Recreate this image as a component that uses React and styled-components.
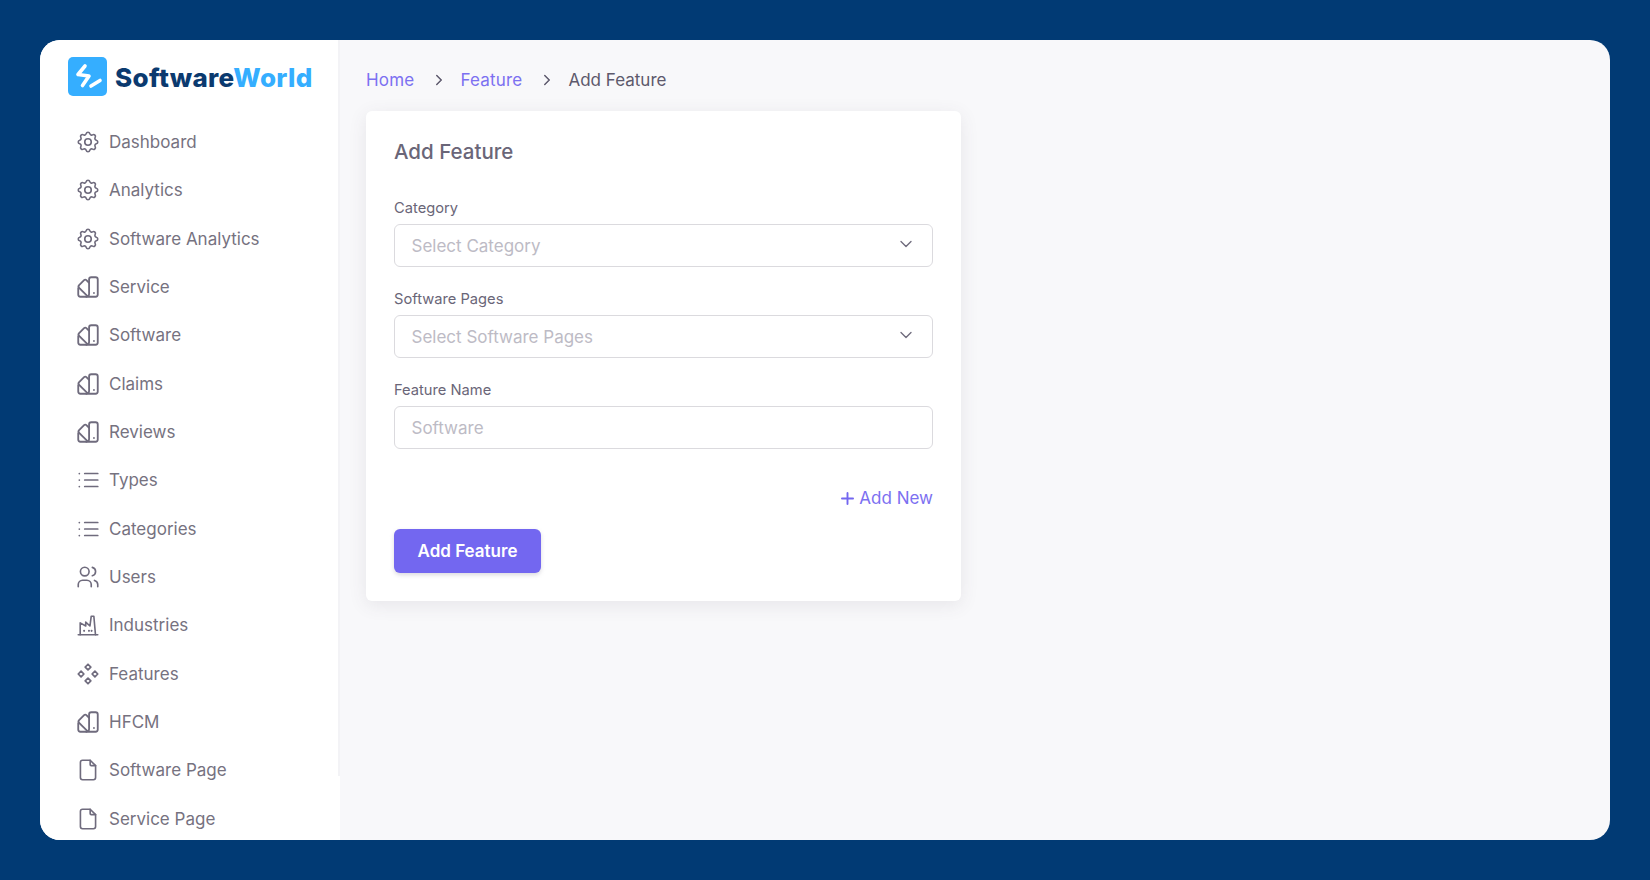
import React from "react"
import styled, { createGlobalStyle } from "styled-components"
import { TbSettings, TbUsers, TbFile, TbChevronRight, TbChevronDown, TbPlus } from "react-icons/tb"

const GlobalStyle = createGlobalStyle`
    html, body {
        margin: 0;
        height: 100%;
        overflow: hidden;
        background: #013a74;
    }
    * {
        box-sizing: border-box;
    }
`;

const SwatchIcon = ({ size = 26 }) => (
    <svg width={size} height={size} viewBox="0 0 24 24" fill="none" stroke="currentColor" strokeWidth="1.7" strokeLinecap="round" strokeLinejoin="round">
        <path d="M13 18.500v-13.500a2 2 0 0 1 2 -2h4a2 2 0 0 1 2 2v14a2 2 0 0 1 -2 2h-8.500a2.500 2.500 0 0 0 2.500 -2.500" />
        <path d="M12.800 8l-2.300 -2.300a1.500 1.500 0 0 0 -2.100 0l-4.600 4.600a1.800 1.800 0 0 0 0 2.500l7.700 7.700" />
        <path d="M3 13v6a2 2 0 0 0 2 2h5.500" />
        <path d="M17.500 17.500v.01" />
    </svg>
);

const ListIcon = ({ size = 26 }) => (
    <svg width={size} height={size} viewBox="0 0 24 24" fill="none" stroke="currentColor" strokeWidth="1.6" strokeLinecap="round">
        <path d="M9 6h12M9 12h12M9 18h12M4 6v.01M4 12v.01M4 18v.01" />
    </svg>
);

const FactoryIcon = ({ size = 26 }) => (
    <svg width={size} height={size} viewBox="0 0 24 24" fill="none" stroke="currentColor" strokeWidth="1.5" strokeLinecap="round" strokeLinejoin="round">
        <path d="M3 21h18" />
        <path d="M4.800 21v-11l5.100 2.900v-3.600l3.900 3.600l1.200 -9h2.400l1.500 17.100" />
        <path d="M8.400 17.400h.01M12.900 17.400h.01M15.300 17.400h.01" strokeWidth="1.900" />
    </svg>
);

const DiamondsIcon = ({ size = 26 }) => (
    <svg width={size} height={size} viewBox="0 0 24 24" fill="none" stroke="currentColor" strokeWidth="1.600" strokeLinejoin="round">
        <path d="M12 3l2.600 2.600l-2.600 2.600l-2.600 -2.600z" />
        <path d="M12 15.800l2.600 2.600l-2.600 2.600l-2.600 -2.600z" />
        <path d="M5.600 9.400l2.600 2.600l-2.600 2.600l-2.600 -2.600z" />
        <path d="M18.400 9.400l2.600 2.600l-2.600 2.600l-2.600 -2.600z" />
    </svg>
);

const navItems = [
    { label: "Dashboard", icon: TbSettings },
    { label: "Analytics", icon: TbSettings },
    { label: "Software Analytics", icon: TbSettings },
    { label: "Service", icon: SwatchIcon },
    { label: "Software", icon: SwatchIcon },
    { label: "Claims", icon: SwatchIcon },
    { label: "Reviews", icon: SwatchIcon },
    { label: "Types", icon: ListIcon },
    { label: "Categories", icon: ListIcon },
    { label: "Users", icon: TbUsers },
    { label: "Industries", icon: FactoryIcon },
    { label: "Features", icon: DiamondsIcon },
    { label: "HFCM", icon: SwatchIcon },
    { label: "Software Page", icon: TbFile },
    { label: "Service Page", icon: TbFile },
];

const Frame = styled.div`
    width: 1650px;
    height: 880px;
    padding: 40px;
    background: #013a74;
    font-family: Inter, "Liberation Sans", sans-serif;
`;

const Window = styled.div`
    display: flex;
    width: 1570px;
    height: 800px;
    border-radius: 20px;
    overflow: hidden;
    background: #f8f8fa;
`;

const Sidebar = styled.aside`
    position: relative;
    width: 300px;
    flex-shrink: 0;
    height: 100%;
    overflow: hidden;
    background: #fff;
    padding: 17px 0 0 28px;
    &::after {
        content: "";
        position: absolute;
        top: 0;
        right: 0;
        bottom: 64px;
        width: 2px;
        background: #f3f3f6;
    }
`;

const Brand = styled.div`
    display: flex;
    align-items: center;
    gap: 8px;
    height: 39px;
    margin-bottom: 22px;
`;

const BrandMark = styled.div`
    display: flex;
    align-items: center;
    justify-content: center;
    width: 39px;
    height: 39px;
    border-radius: 5px;
    background: #35aeff;
`;

const BrandName = styled.span`
    margin-top: 2px;
    font-size: 26px;
    font-weight: 800;
    letter-spacing: 0.35px;
    color: #0b3a6f;
    white-space: nowrap;
`;

const BrandAccent = styled.span`
    color: #35aeff;
`;

const NavList = styled.nav`
    display: flex;
    flex-direction: column;
    padding-left: 7px;
`;

const NavRow = styled.div`
    display: flex;
    align-items: center;
    gap: 8px;
    height: 48.33px;
    font-size: 17px;
    color: #76727f;
    white-space: nowrap;
    svg {
        flex-shrink: 0;
        color: #6f6b7d;
    }
`;

const Main = styled.main`
    flex: 1;
    padding: 26px 26px 0;
`;

const Breadcrumb = styled.div`
    display: flex;
    align-items: center;
    height: 28px;
    margin-bottom: 17px;
    font-size: 17px;
`;

const Crumb = styled.span`
    color: ${props => props.$link ? "#7c70f1" : "#5d596c"};
    letter-spacing: ${props => props.$link ? "0.2px" : "0"};
`;

const CrumbSep = styled.span`
    display: flex;
    justify-content: center;
    width: 46px;
    padding-left: 3px;
    color: #5d596c;
`;

const Card = styled.section`
    width: 595px;
    padding: 28px;
    background: #fff;
    border-radius: 6px;
    box-shadow: 0 4px 18px rgba(75, 70, 92, 0.1);
`;

const CardTitle = styled.h2`
    margin: 0 0 33px;
    font-size: 20.5px;
    line-height: 26px;
    font-weight: 500;
    color: #6a6678;
`;

const Field = styled.div`
    display: flex;
    flex-direction: column;
    margin-bottom: 22px;
`;

const Label = styled.label`
    margin-bottom: 6px;
    font-size: 14.7px;
    line-height: 20px;
    color: #6a6678;
`;

const Control = styled.div`
    display: flex;
    align-items: center;
    justify-content: space-between;
    height: 43px;
    padding: 0 16px 0 16.500px;
    border: 1px solid #dbdade;
    border-radius: 6px;
    background: #fff;
    font-size: 17px;
    color: #bdbbc5;
    svg {
        margin-top: -3px;
        color: #6f6b7d;
    }
`;

const AddNewRow = styled.div`
    display: flex;
    justify-content: flex-end;
    align-items: center;
    gap: 2px;
    margin-top: 37px;
    height: 24px;
    font-size: 17px;
    color: #7c70f1;
    svg {
        color: #7367f0;
    }
`;

const SubmitButton = styled.button`
    display: block;
    width: 147px;
    height: 44px;
    margin-top: 19px;
    border: 0;
    border-radius: 6px;
    background: #7367f0;
    box-shadow: 0 2px 4px rgba(165, 163, 174, 0.4);
    color: #fff;
    font-family: inherit;
    font-size: 17px;
    font-weight: 600;
`;

const App = () => (
    <Frame>
        <GlobalStyle />
        <Window>
            <Sidebar>
                <Brand>
                    <BrandMark>
                        <svg width="39" height="39" viewBox="0 0 39 39" fill="none" stroke="#fff" strokeWidth="3.600" strokeLinecap="round" strokeLinejoin="round">
                            <path d="M17 9l-7 8.500l11 1.500l-6.500 9.500" />
                            <path d="M32 23.500l-9 5.500" />
                        </svg>
                    </BrandMark>
                    <BrandName>Software<BrandAccent>World</BrandAccent></BrandName>
                </Brand>
                <NavList>
                    {
                        navItems.map(item =>
                        <NavRow key={item.label}>
                            <item.icon size={26} strokeWidth={1.5} />
                            {item.label}
                        </NavRow>)
                    }
                </NavList>
            </Sidebar>
            <Main>
                <Breadcrumb>
                    <Crumb $link>Home</Crumb>
                    <CrumbSep><TbChevronRight size={18} /></CrumbSep>
                    <Crumb $link>Feature</Crumb>
                    <CrumbSep><TbChevronRight size={18} /></CrumbSep>
                    <Crumb>Add Feature</Crumb>
                </Breadcrumb>
                <Card>
                    <CardTitle>Add Feature</CardTitle>
                    <Field>
                        <Label>Category</Label>
                        <Control>Select Category<TbChevronDown size={20} strokeWidth={1.6} /></Control>
                    </Field>
                    <Field>
                        <Label>Software Pages</Label>
                        <Control>Select Software Pages<TbChevronDown size={20} strokeWidth={1.6} /></Control>
                    </Field>
                    <Field>
                        <Label>Feature Name</Label>
                        <Control>Software</Control>
                    </Field>
                    <AddNewRow><TbPlus size={19} strokeWidth={2.4} />Add New</AddNewRow>
                    <SubmitButton>Add Feature</SubmitButton>
                </Card>
            </Main>
        </Window>
    </Frame>
);

export default App;
